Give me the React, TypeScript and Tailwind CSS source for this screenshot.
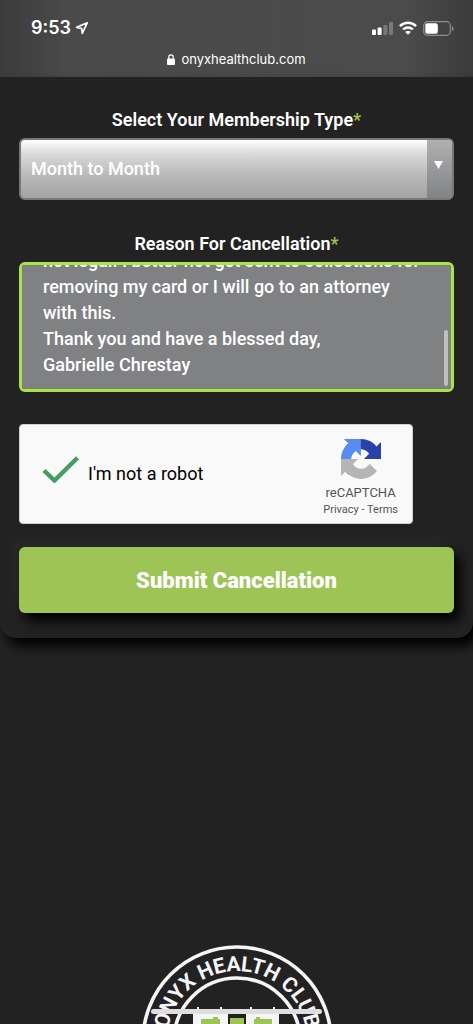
import React, { useEffect, useRef, useState } from 'react';

const MEMBERSHIP_TYPES = ['Month to Month'];

const REASON = `not legal. I better not get sent to collections for removing my card or I will go to an attorney with this.
Thank you and have a blessed day,
Gabrielle Chrestay`;

const StatusBar: React.FC = () => (
  <header className="bg-[linear-gradient(to_right,#3b3b3b,#4a4a4a_14%,#4b4b4b_86%,#3b3b3b)] text-white">
    <div className="flex items-center justify-between pt-4 pl-[31px] pr-[19px]">
      <div className="flex items-center gap-1 font-['Inter',sans-serif] text-lg leading-6 font-semibold">
        <span>9:53</span>
        <svg className="h-3.5 w-3.5" viewBox="0 0 14 14" fill="none" stroke="currentColor" strokeWidth="1.7" strokeLinejoin="round">
          <path d="M12.2 1.8 1.6 6.4l5 .9.7 5z" />
        </svg>
      </div>
      <div className="flex items-center gap-1.5">
        <svg className="h-[13px] w-[21px]" viewBox="0 0 21 13" fill="currentColor">
          <rect x="0" y="7.5" width="4" height="5.5" rx="1" />
          <rect x="5.6" y="5.5" width="4" height="7.5" rx="1" />
          <rect x="11.4" y="3" width="4" height="10" rx="1" opacity="0.25" />
          <rect x="17" y="0" width="4" height="13" rx="1" opacity="0.25" />
        </svg>
        <svg className="h-[14px] w-[18px]" viewBox="0 0 18 14" fill="none" stroke="currentColor" strokeWidth="2.4">
          <path d="M.9 5.1a11.6 11.6 0 0 1 16.2 0" />
          <path d="M4.1 8.5a7 7 0 0 1 9.8 0" />
          <path d="M9 13.8 6.2 11a4 4 0 0 1 5.6 0z" fill="currentColor" stroke="none" />
        </svg>
        <svg className="h-[15px] w-[31px]" viewBox="0 0 31 15" fill="none">
          <rect x=".7" y=".7" width="26.6" height="13.6" rx="3.8" stroke="#8f8f8f" strokeWidth="1.2" />
          <rect x="2.3" y="2.3" width="12.5" height="10.4" rx="2" fill="#fff" />
          <path d="M29 5v5c1-.4 1.6-1.3 1.6-2.5S30 5.4 29 5z" fill="#8f8f8f" />
        </svg>
      </div>
    </div>
    <div className="flex items-center justify-center gap-1.5 pt-[9px] pb-2 font-['Inter',sans-serif] text-[13px] leading-5">
      <svg className="h-[11px] w-2" viewBox="0 0 8 11">
        <rect y="4.5" width="8" height="6.5" rx="1" fill="#fff" />
        <path d="M1.8 5V3a2.2 2.2 0 0 1 4.4 0v2" fill="none" stroke="#fff" strokeWidth="1.2" />
      </svg>
      <span>onyxhealthclub.com</span>
    </div>
  </header>
);

interface FieldLabelProps {
  htmlFor: string;
  children: React.ReactNode;
}

const FieldLabel: React.FC<FieldLabelProps> = ({ htmlFor, children }) => (
  <label htmlFor={htmlFor} className="mb-1.5 block text-center text-lg leading-6 font-semibold text-white">
    {children}
    <span className="text-[#9dc455]">*</span>
  </label>
);

const RecaptchaLogo: React.FC = () => (
  <svg className="h-10 w-10" viewBox="0 0 64 64">
    <path
      d="M64 31.955a33 33 0 0 0-.033-1.37V4.687l-7.16 7.16C50.948 4.674 42.033.093 32.05.093c-10.39 0-19.622 4.96-25.46 12.64l11.736 11.86a15.55 15.55 0 0 1 4.754-5.334c2.05-1.6 4.952-2.906 8.968-2.906.485 0 .86.057 1.135.163 4.976.393 9.288 3.14 11.828 7.124l-8.307 8.307L64 31.953"
      fill="#2a41ab"
    />
    <path
      d="M31.862.094a33 33 0 0 0-1.37.033H4.594l7.16 7.16C4.58 13.147 0 22.06 0 32.046c0 10.39 4.96 19.622 12.64 25.46L24.5 45.77a15.55 15.55 0 0 1-5.334-4.754c-1.6-2.05-2.906-4.952-2.906-8.968 0-.485.057-.86.163-1.135.393-4.976 3.14-9.288 7.124-11.828l8.307 8.307L31.86.095"
      fill="#588df0"
    />
    <path
      d="M.001 32.045a33 33 0 0 0 .033 1.37v25.898l7.16-7.16c5.86 7.173 14.774 11.754 24.76 11.754 10.39 0 19.622-4.96 25.46-12.64l-11.736-11.86a15.55 15.55 0 0 1-4.754 5.334c-2.05 1.6-4.952 2.906-8.968 2.906-.485 0-.86-.057-1.135-.163-4.976-.393-9.288-3.14-11.828-7.124l8.307-8.307L0 32.046"
      fill="#b5b5b5"
    />
  </svg>
);

const Recaptcha: React.FC = () => {
  const [checked, setChecked] = useState(true);

  return (
    <div className="mt-8 flex h-[100px] max-w-[394px] items-center justify-between rounded border border-[#cfcfcf] bg-[#f9f9f9] pr-3.5 pl-[22px] font-['Roboto',sans-serif]">
      <label htmlFor="robot" className="flex items-center gap-2 text-lg leading-6 text-black">
        <span className="relative h-9 w-[38px]">
          <input
            id="robot"
            type="checkbox"
            checked={checked}
            onChange={(e) => setChecked(e.target.checked)}
            className="h-9 w-[38px] appearance-none"
          />
          {checked && (
            <svg className="pointer-events-none absolute inset-0 h-[27px] w-[38px]" viewBox="0 0 38 27" fill="none">
              <path d="M2 14.5 12.5 24.5 35.5 1.8" stroke="#459d62" strokeWidth="4.4" />
            </svg>
          )}
        </span>
        I'm not a robot
      </label>
      <div className="flex flex-col items-center pt-2 text-[#555]">
        <RecaptchaLogo />
        <div className="mt-1 text-[13px] leading-5">reCAPTCHA</div>
        <div className="text-[11px] leading-3.5">
          <a href="#privacy">Privacy</a> - <a href="#terms">Terms</a>
        </div>
      </div>
    </div>
  );
};

const ClubLogo: React.FC = () => (
  <svg className="h-48 w-48" viewBox="0 0 192 192">
    <circle cx="96" cy="96" r="94" fill="#222" stroke="#f5f5f5" strokeWidth="3.6" />
    <circle cx="96" cy="96" r="63" fill="none" stroke="#f5f5f5" strokeWidth="3.6" />
    <path id="club-arc" d="M26 96a70 70 0 0 1 140 0" fill="none" />
    <text fill="#f5f5f5" fontFamily="Roboto, sans-serif" fontSize="21" fontWeight="700" textAnchor="middle">
      <textPath href="#club-arc" startOffset="50%">
        ONYX HEALTH CLUB
      </textPath>
    </text>
    {/* building */}
    <path d="M56 62h2v4h-2zM79 62h2v4h-2zM109 62h2v4h-2zM132 62h2v4h-2z" fill="#f5f5f5" />
    <rect x="52" y="68" width="86" height="60" fill="#f5f5f5" />
    <rect x="87" y="69" width="18" height="59" fill="#222" />
    <path d="M60 74h12v-2h5v2h2v50H60zM89 73h14v51H89zM113 74h2v-2h4v2h12v50h-18z" fill="#9dc455" />
  </svg>
);

export default function App() {
  const reasonRef = useRef<HTMLTextAreaElement>(null);

  // start at the end of the message
  useEffect(() => {
    const el = reasonRef.current;
    if (el) el.scrollTop = el.scrollHeight;
  }, []);

  return (
    <div className="relative h-dvh overflow-hidden bg-[#222] font-['Roboto',sans-serif]">
      <StatusBar />

      <form
        onSubmit={(e) => e.preventDefault()}
        className="rounded-b-2xl bg-[#222] px-[19px] pt-[31px] pb-[25px] shadow-[6px_8px_12px_#000]"
      >
        <FieldLabel htmlFor="membership">Select Your Membership Type</FieldLabel>
        <div className="relative">
          <select
            id="membership"
            className="block h-[62px] w-full appearance-none rounded-md border-2 border-[#777879] bg-[linear-gradient(#fff,#d8d8d8_25%,#bababa_60%,#a2a3a3)] pl-2.5 text-lg font-medium text-white"
          >
            {MEMBERSHIP_TYPES.map((type) => (
              <option key={type}>{type}</option>
            ))}
          </select>
          <div className="pointer-events-none absolute inset-y-0.5 right-0.5 flex w-[25px] items-center justify-center rounded-r bg-linear-to-b from-[#b0b0b1] to-[#828385] pr-0.5 pb-2">
            <svg className="h-2 w-[9px]" viewBox="0 0 9 8">
              <path d="M0 0h9L4.5 8z" fill="#fff" />
            </svg>
          </div>
        </div>

        <div className="mt-8">
          <FieldLabel htmlFor="reason">Reason For Cancellation</FieldLabel>
          <div className="relative">
            <textarea
              id="reason"
              ref={reasonRef}
              defaultValue={REASON}
              className="block h-[130px] w-full resize-none rounded-md border-3 border-[#a8e446] bg-[#808183] py-[11px] pr-7 pl-[21px] text-lg leading-[26px] font-medium text-white outline-none [scrollbar-width:none]"
            />
            <div className="pointer-events-none absolute right-1.5 bottom-1.5 h-14 w-1 rounded-full bg-[#bfbfc0]" />
          </div>
        </div>

        <Recaptcha />

        <button
          type="submit"
          className="mt-[23px] h-[66px] w-full rounded-md bg-[#9dc455] text-[22px] font-black text-white shadow-[6px_8px_12px_#000,-6px_-6px_14px_#2a2a2a]"
        >
          Submit Cancellation
        </button>
      </form>

      <footer className="mt-[307px] flex justify-center">
        <ClubLogo />
      </footer>

      <div className="absolute inset-x-0 bottom-2.5 flex justify-center">
        <div className="h-[5px] w-[36%] rounded-full bg-[#dedede]" />
      </div>
    </div>
  );
}
